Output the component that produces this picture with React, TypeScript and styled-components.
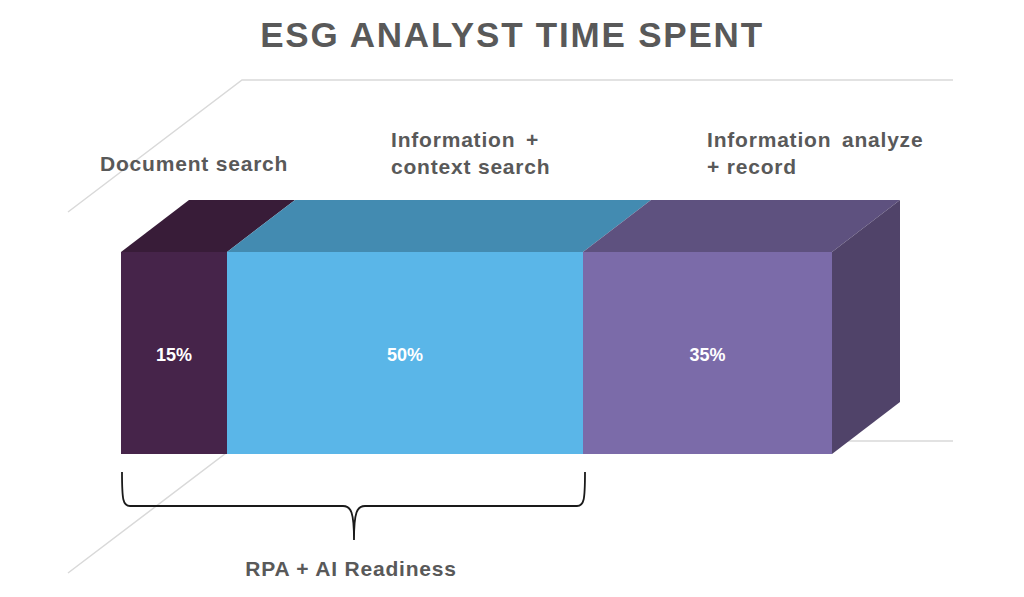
import styled, { createGlobalStyle } from "styled-components";

const GlobalStyle = createGlobalStyle`
  html, body {
    margin: 0;
    padding: 0;
    background: #ffffff;
  }
  body {
    font-family: "Liberation Sans", Arial, sans-serif;
  }
`;

const Page = styled.div`
  width: 1024px;
  height: 597px;
  display: flex;
  flex-direction: column;
  overflow: hidden;
  background: #ffffff;
`;

const Title = styled.h1`
  margin: 0;
  height: 54px;
  padding-top: 15px;
  box-sizing: border-box;
  line-height: 40px;
  text-align: center;
  font-family: "Liberation Sans", Arial, sans-serif;
  font-size: 35px;
  font-weight: 700;
  letter-spacing: 1.8px;
  color: #595959;
`;

const Chart = styled.svg`
  display: block;
  width: 1024px;
  height: 543px;
`;

const Label = styled.text<{ $wide?: boolean }>`
  font-family: "Liberation Sans", Arial, sans-serif;
  font-size: 21px;
  font-weight: 700;
  letter-spacing: 0.8px;
  word-spacing: ${(p) => (p.$wide ? "4px" : "0")};
  fill: #595959;
`;

const Percent = styled.text`
  font-family: "Liberation Sans", Arial, sans-serif;
  font-size: 18px;
  font-weight: 700;
  fill: #ffffff;
  text-anchor: middle;
`;

const GridLine = styled.polyline`
  fill: none;
  stroke: #d9d9d9;
  stroke-width: 1.5;
`;

const Brace = styled.path`
  fill: none;
  stroke: #1a1a1a;
  stroke-width: 1.8;
`;

// bar geometry
const TOP = 252;
const BOTTOM = 454;
const DX = 68;
const DY = 52;

const segments = [
  { x0: 121, x1: 227, front: "#46244a", top: "#381c38", pct: "15%" },
  { x0: 227, x1: 583, front: "#5ab6e8", top: "#438bb1", pct: "50%" },
  { x0: 583, x1: 832, front: "#7b6ba9", top: "#5e517f", pct: "35%" },
];

const pts = (arr: number[][]) => arr.map((p) => p.join(",")).join(" ");

function Bar() {
  const last = segments[segments.length - 1];
  return (
    <g>
      {segments.map((s) => (
        <g key={s.pct}>
          <polygon
            points={pts([
              [s.x0, TOP],
              [s.x0 + DX, TOP - DY],
              [s.x1 + DX, TOP - DY],
              [s.x1, TOP],
            ])}
            fill={s.top}
          />
          <rect x={s.x0} y={TOP} width={s.x1 - s.x0} height={BOTTOM - TOP} fill={s.front} />
          <Percent x={(s.x0 + s.x1) / 2} y={361}>
            {s.pct}
          </Percent>
        </g>
      ))}
      <polygon
        points={pts([
          [last.x1, TOP],
          [last.x1 + DX, TOP - DY],
          [last.x1 + DX, BOTTOM - DY],
          [last.x1, BOTTOM],
        ])}
        fill="#504369"
      />
    </g>
  );
}

export default function App() {
  return (
    <>
      <GlobalStyle />
      <Page>
        <Title>ESG ANALYST TIME SPENT</Title>
        <Chart viewBox="0 54 1024 543">
          <GridLine points="68,212 242,80 953,80" />
          <GridLine points="68,573 242,441 953,441" />
          <Bar />
          <Label x={100} y={171}>Document search</Label>
          <Label x={391} y={147} $wide>Information +</Label>
          <Label x={391} y={174}>context search</Label>
          <Label x={707} y={147} $wide>Information analyze</Label>
          <Label x={707} y={174}>+ record</Label>
          <Brace d="M122,472 C122,500 123,506 130,506 L343,506 C351,506 354,512 354,540 C354,512 357,506 365,506 L577,506 C584,506 585,500 585,472" />
          <Label x={351} y={576} textAnchor="middle">RPA + AI Readiness</Label>
        </Chart>
      </Page>
    </>
  );
}
